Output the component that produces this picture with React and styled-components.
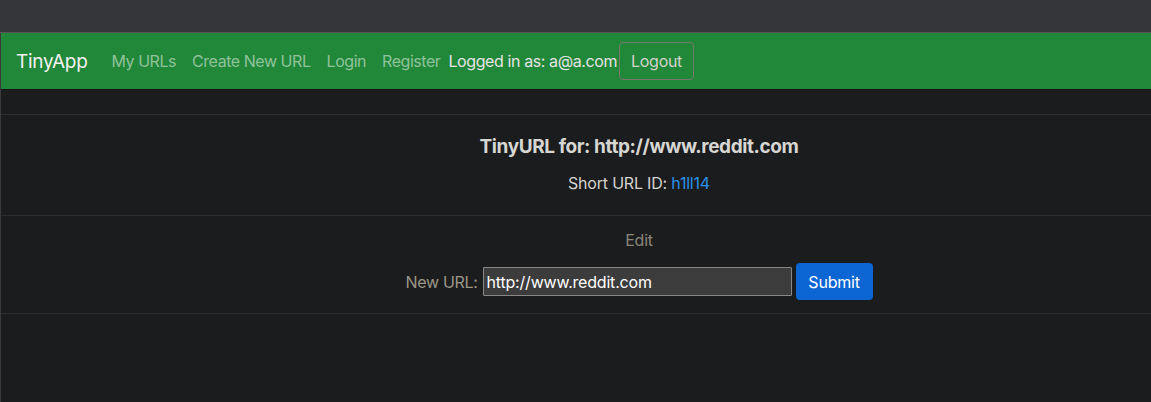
import React from "react";
import styled, { createGlobalStyle } from "styled-components";

const Global = createGlobalStyle`
  html, body {
    margin: 0;
    padding: 0;
    background: #1b1c1e;
  }
  body {
    font-family: Inter, "Liberation Sans", Arial, sans-serif;
    font-size: 16px;
    color: #d4d4d4;
  }
`;

const Chrome = styled.div`
  height: 32px;
  background: #35363a;
  border-bottom: 1px solid #58585c;
`;

const Page = styled.div`
  border-left: 1px solid #3a3a3d;
  min-height: 369px;
`;

const Nav = styled.nav`
  display: flex;
  align-items: center;
  height: 57px;
  padding: 0 15px;
  background: #218739;
  border-bottom: 1px solid #141517;
  box-sizing: border-box;
`;

const Brand = styled.span`
  font-size: 19px;
  color: #f2f2f2;
  margin-right: 16px;
  letter-spacing: -0.3px;
`;

const NavLink = styled.span`
  padding: 0 8px;
  color: #8fc39b;
  letter-spacing: -0.45px;
  white-space: nowrap;
`;

const Who = styled.span`
  color: #e4e4e4;
  letter-spacing: -0.4px;
  white-space: nowrap;
`;

const OutlineButton = styled.button`
  margin-left: 2px;
  height: 38px;
  padding: 0 11px;
  background: transparent;
  border: 1px solid #77786c;
  border-radius: 4px;
  color: #d2d2cc;
  font: inherit;
  letter-spacing: -0.3px;
`;

const Main = styled.main`
  padding-top: 24px;
`;

const Section = styled.section`
  border-top: 1px solid #2d2e31;
  display: flex;
  flex-direction: column;
  align-items: center;
  padding: ${(p) => p.$pad};
  padding-left: 126px;
  gap: ${(p) => p.$gap || "12px"};
  &:last-child {
    border-bottom: 1px solid #2d2e31;
  }
`;

const Heading = styled.h2`
  margin: 0;
  font-size: 19px;
  line-height: 24px;
  font-weight: 700;
  color: #d6d6d2;
  letter-spacing: -0.4px;
`;

const Line = styled.p`
  margin: 0;
  font-size: 16px;
  line-height: 24px;
  color: ${(p) => p.$color || "#d4d4d0"};
  letter-spacing: -0.2px;
`;

const Link = styled.a`
  color: #2c90ea;
  text-decoration: none;
`;

const Form = styled.form`
  display: flex;
  align-items: center;
  gap: 4px;
  margin: 0;
`;

const Label = styled.label`
  color: #9b9686;
  font-size: 16px;
  margin-right: 1px;
  letter-spacing: -0.3px;
`;

const Input = styled.input`
  width: 309px;
  height: 29px;
  box-sizing: border-box;
  background: #3c3c3c;
  border: 1px solid #878787;
  border-radius: 1px;
  color: #ffffff;
  font: inherit;
  font-size: 16px;
  padding: 0 3px;
  letter-spacing: -0.2px;
`;

const SubmitButton = styled.button`
  height: 37px;
  width: 77px;
  background: #0b66d4;
  border: none;
  border-radius: 4px;
  color: #ffffff;
  font: inherit;
  font-size: 16px;
  letter-spacing: -0.2px;
`;

export default function App() {
  return (
    <>
      <Global />
      <Chrome />
      <Page>
        <Nav>
          <Brand>TinyApp</Brand>
          <NavLink>My URLs</NavLink>
          <NavLink>Create New URL</NavLink>
          <NavLink>Login</NavLink>
          <NavLink>Register</NavLink>
          <Who>Logged in as: a@a.com</Who>
          <OutlineButton>Logout</OutlineButton>
        </Nav>
        <Main>
          <Section $pad="20px 0 20px">
            <Heading>TinyURL for: http://www.reddit.com</Heading>
            <Line>
              Short URL ID: <Link href="#">h1ll14</Link>
            </Line>
          </Section>
          <Section $pad="12px 0 13px" $gap="11px">
            <Line $color="#8b877a">Edit</Line>
            <Form onSubmit={(e) => e.preventDefault()}>
              <Label>New URL:</Label>
              <Input defaultValue="http://www.reddit.com" />
              <SubmitButton type="submit">Submit</SubmitButton>
            </Form>
          </Section>
        </Main>
      </Page>
    </>
  );
}
